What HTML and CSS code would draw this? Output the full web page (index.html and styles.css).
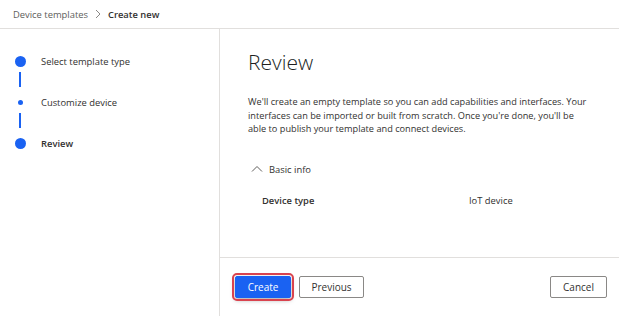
FILE: index.html
```html
<!DOCTYPE html>
<html lang="en">
<head>
  <meta charset="UTF-8" />
  <meta name="viewport" content="width=device-width, initial-scale=1.0"/>
  <title>Create new device template</title>
  <link rel="stylesheet" href="styles.css">
</head>
<body>

  <div class="breadcrumb">
    <span class="crumb">Device templates</span>
    <svg class="crumb-sep" width="8" height="10" viewBox="0 0 8 10"><path d="M2 1 L6 5 L2 9" fill="none" stroke="#8a8886" stroke-width="1"/></svg>
    <span class="crumb current">Create new</span>
  </div>

  <div class="main">
    <div class="steps">
      <div class="step">
        <span class="marker"><span class="dot"></span></span>
        <span class="label">Select template type</span>
      </div>
      <div class="connector"></div>
      <div class="step">
        <span class="marker"><span class="dot small"></span></span>
        <span class="label">Customize device</span>
      </div>
      <div class="connector"></div>
      <div class="step active">
        <span class="marker"><span class="dot"></span></span>
        <span class="label">Review</span>
      </div>
    </div>

    <div class="content">
      <div class="review-body">
        <h1>Review</h1>
        <p class="intro">We'll create an empty template so you can add capabilities and interfaces. Your interfaces can be imported or built from scratch. Once you're done, you'll be able to publish your template and connect devices.</p>

        <div class="section-toggle">
          <svg width="12" height="8" viewBox="0 0 12 8"><path d="M1 6.5 L6 1.5 L11 6.5" fill="none" stroke="#605e5c" stroke-width="1"/></svg>
          <span>Basic info</span>
        </div>

        <div class="info-row">
          <span class="info-key">Device type</span>
          <span class="info-value">IoT device</span>
        </div>
      </div>

      <div class="footer">
        <button class="btn primary highlighted">Create</button>
        <button class="btn previous">Previous</button>
        <button class="btn cancel">Cancel</button>
      </div>
    </div>
  </div>

</body>
</html>
```

FILE: styles.css
```css
body {
  margin: 0;
  width: 619px;
  height: 316px;
  overflow: hidden;
  font-family: 'Open Sans', 'Noto Sans', sans-serif;
  font-size: 9.4px;
  color: #323130;
  background-color: #ffffff;
}

.breadcrumb {
  height: 29px;
  display: flex;
  align-items: center;
  gap: 6px;
  padding-left: 13px;
  border-bottom: 1px solid #e1dfdd;
  box-sizing: border-box;
}

.crumb {
  color: #605e5c;
}

.crumb.current {
  color: #323130;
  font-weight: 600;
}

.main {
  display: flex;
  height: 287px;
}

.steps {
  width: 219px;
  flex-shrink: 0;
  border-right: 1px solid #e1dfdd;
  padding-top: 22px;
}

.step {
  display: flex;
  align-items: center;
  height: 20px;
}

.step + .connector {
  margin-top: 1px;
}

.connector + .step {
  margin-top: 5px;
}

.marker {
  width: 41px;
  flex-shrink: 0;
  display: flex;
  justify-content: center;
  padding-right: 1px;
  box-sizing: border-box;
}

.dot {
  width: 11px;
  height: 11px;
  border-radius: 50%;
  background-color: #1a62f2;
}

.dot.small {
  width: 5px;
  height: 5px;
}

.connector {
  width: 2px;
  height: 15px;
  margin-left: 19px;
  background-color: #1a62f2;
}

.step.active .label {
  font-weight: 600;
}

.content {
  flex: 1;
  display: flex;
  flex-direction: column;
}

.review-body {
  flex: 1;
  padding: 0 28px;
}

h1 {
  font-size: 21px;
  font-weight: 300;
  color: #201f1e;
  margin: 19px 0 0;
  line-height: 28px;
}

.intro {
  font-size: 9.2px;
  line-height: 13.5px;
  margin: 19px 0 0;
  width: 345px;
}

.section-toggle {
  display: flex;
  align-items: center;
  gap: 6px;
  margin-top: 27px;
  padding-left: 3px;
}

.info-row {
  display: flex;
  margin-top: 18px;
  padding-left: 14px;
}

.info-key {
  width: 207px;
  font-weight: 600;
}

.footer {
  height: 59px;
  box-sizing: border-box;
  border-top: 1px solid #e1dfdd;
  display: flex;
  align-items: flex-start;
  gap: 8px;
  padding: 18px 14px 0 15px;
}

.btn {
  height: 22px;
  padding: 0;
  font-family: inherit;
  font-size: 10px;
  color: #323130;
  background-color: #ffffff;
  border: 1px solid #8a8886;
  border-radius: 2px;
}

.btn.primary {
  width: 56px;
  background-color: #1a62f2;
  border-color: #1a62f2;
  color: #ffffff;
}

.btn.highlighted {
  outline: 2px solid #d9434e;
  outline-offset: 1px;
  box-shadow: 0 2px 5px rgba(0,0,0,0.35);
}

.btn.previous {
  width: 65px;
}

.btn.cancel {
  margin-left: auto;
  width: 57px;
}
```
